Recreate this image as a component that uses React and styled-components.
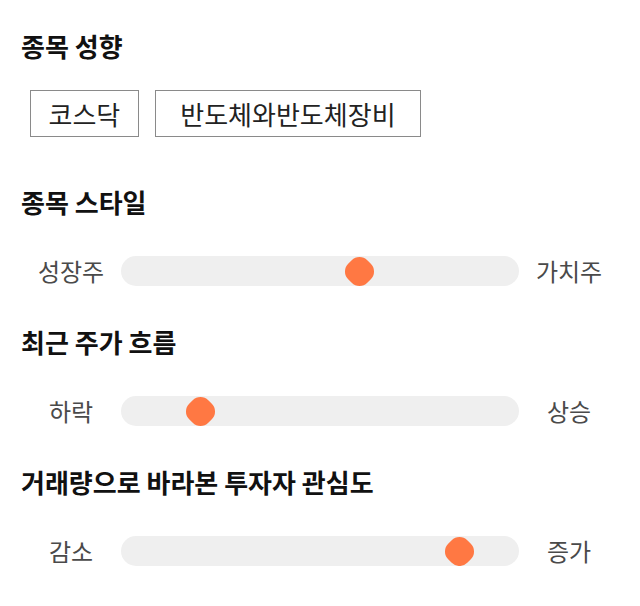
import React from "react";
import styled, { createGlobalStyle } from "styled-components";

const GlobalStyle = createGlobalStyle`
  * {
    box-sizing: border-box;
  }
  body {
    margin: 0;
    background: #ffffff;
    font-family: "Noto Sans CJK KR", "Noto Sans", sans-serif;
  }
`;

const sliders = [
  { title: "종목 스타일", left: "성장주", right: "가치주", value: 60 },
  { title: "최근 주가 흐름", left: "하락", right: "상승", value: 20 },
  { title: "거래량으로 바라본 투자자 관심도", left: "감소", right: "증가", value: 85 },
];

export default function App() {
  return (
    <>
      <GlobalStyle />
      <Page>
        <Section>
          <Title $gap={27}>종목 성향</Title>
          <ChipRow>
            <Chip $pad={17.5}>코스닥</Chip>
            <Chip $pad={24.5}>반도체와반도체장비</Chip>
          </ChipRow>
        </Section>
        {sliders.map((s, i) => (
          <Section key={s.title} $top={i === 0 ? 48 : 39}>
            <Title $gap={37}>{s.title}</Title>
            <SliderRow>
              <EndLabel>{s.left}</EndLabel>
              <Track>
                <Thumb style={{ left: `calc(${s.value}% - 13.5px)` }} />
              </Track>
              <EndLabel>{s.right}</EndLabel>
            </SliderRow>
          </Section>
        ))}
      </Page>
    </>
  );
}

const Page = styled.div`
  padding: 29px 21px 0;
  display: flex;
  flex-direction: column;
`;

const Section = styled.section`
  display: flex;
  flex-direction: column;
  margin-top: ${(p) => p.$top || 0}px;
`;

const Title = styled.h2`
  margin: 0 0 ${(p) => p.$gap}px;
  font-size: 26px;
  line-height: 34px;
  font-weight: 700;
  color: #111111;
`;

const ChipRow = styled.div`
  display: flex;
  gap: 16px;
  padding-left: 9px;
`;

const Chip = styled.div`
  height: 47px;
  display: flex;
  align-items: center;
  padding: 0 ${(p) => p.$pad}px;
  border: 1px solid #8a8a8a;
  font-size: 26px;
  color: #222222;
  background: #ffffff;
`;

const SliderRow = styled.div`
  display: flex;
  align-items: center;
  height: 30px;
`;

const EndLabel = styled.span`
  width: 100px;
  flex: none;
  text-align: center;
  font-size: 24px;
  line-height: 30px;
  color: #4a4a4a;
`;

const Track = styled.div`
  position: relative;
  flex: 1;
  height: 30px;
  border-radius: 15px;
  background: #efefef;
`;

const Thumb = styled.div`
  position: absolute;
  top: 1.5px;
  width: 27px;
  height: 27px;
  border-radius: 11px;
  background: #ff7843;
  transform: rotate(45deg);
`;
